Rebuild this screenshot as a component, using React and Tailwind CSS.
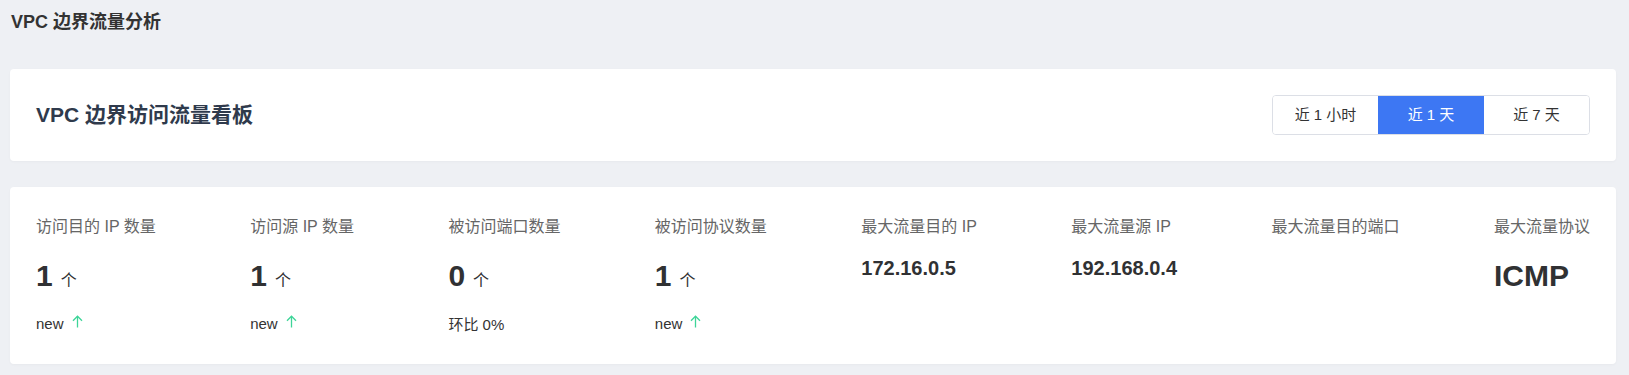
const FONT = { fontFamily: '"Liberation Sans", "Noto Sans CJK SC", sans-serif' };

const ranges = ['近 1 小时', '近 1 天', '近 7 天'];

const stats = [
  { label: '访问目的 IP 数量', count: 1, trend: 'new' },
  { label: '访问源 IP 数量', count: 1, trend: 'new' },
  { label: '被访问端口数量', count: 0, ratio: '环比 0%' },
  { label: '被访问协议数量', count: 1, trend: 'new' },
  { label: '最大流量目的 IP', ip: '172.16.0.5' },
  { label: '最大流量源 IP', ip: '192.168.0.4' },
  { label: '最大流量目的端口', ip: '' },
  { label: '最大流量协议', big: 'ICMP' },
];

// thin green up arrow next to "new"
function UpArrow() {
  return (
    <svg width="11" height="13" viewBox="0 0 11 13" fill="none" className="ml-[8px] -mt-[5px]">
      <path d="M5.5 1.2V12.5" stroke="#3dd598" strokeWidth="1.3" />
      <path d="M1 5.7L5.5 1.2L10 5.7" stroke="#3dd598" strokeWidth="1.3" />
    </svg>
  );
}

function StatItem({ item }) {
  return (
    <div className="flex flex-col">
      {/* Label */}
      <div className="text-[16px] leading-6 text-[#666]">{item.label}</div>

      {/* Value */}
      {item.count !== undefined && (
        <>
          <div className="mt-[19px] flex items-baseline h-9">
            <span className="text-[30px] leading-9 font-bold text-[#303133]">{item.count}</span>
            <span className="ml-2 text-[16px] text-[#303133]">个</span>
          </div>
          <div className="mt-[18px] flex items-center h-6 text-[15px] text-[#333]">
            {item.trend ? (
              <>
                <span>{item.trend}</span>
                <UpArrow />
              </>
            ) : (
              <span className="mt-[2px]">{item.ratio}</span>
            )}
          </div>
        </>
      )}
      {item.ip !== undefined && (
        <div className="mt-[17px] text-[20px] leading-6 font-bold text-[#303133]">{item.ip}</div>
      )}
      {item.big && (
        <div className="mt-[19px] text-[30px] leading-9 font-bold text-[#303133]">{item.big}</div>
      )}
    </div>
  );
}

export default function App() {
  const active = 1;

  return (
    <div className="min-h-[375px] bg-[#eef0f4] px-[10px] pt-[10px] pb-[11px]" style={FONT}>
      {/* Page title */}
      <h1 className="text-[18px] leading-6 font-bold text-[#333] pl-px">VPC 边界流量分析</h1>

      {/* Header card */}
      <div className="mt-[35px] mr-[3px] bg-white rounded flex items-center justify-between px-[26px] py-[26px] shadow-[0_1px_3px_rgba(0,0,0,0.03)]">
        <h2 className="text-[21px] leading-7 font-bold text-[#2f3a4c]">VPC 边界访问流量看板</h2>
        <div className="flex h-10 border border-[#dcdfe6] rounded overflow-hidden">
          {ranges.map((r, i) => (
            <button
              key={r}
              className={
                i === active
                  ? 'w-[106px] text-[15px] bg-[#3d77f3] text-white'
                  : 'w-[105px] text-[15px] bg-white text-[#333]'
              }
            >
              {r}
            </button>
          ))}
        </div>
      </div>

      {/* Stats card */}
      <div className="mt-[26px] mr-[3px] bg-white rounded px-[26px] pt-[28px] pb-[28px] shadow-[0_1px_3px_rgba(0,0,0,0.03)]">
        <div className="flex justify-between items-start">
          {stats.map((s) => (
            <StatItem key={s.label} item={s} />
          ))}
        </div>
      </div>
    </div>
  );
}
